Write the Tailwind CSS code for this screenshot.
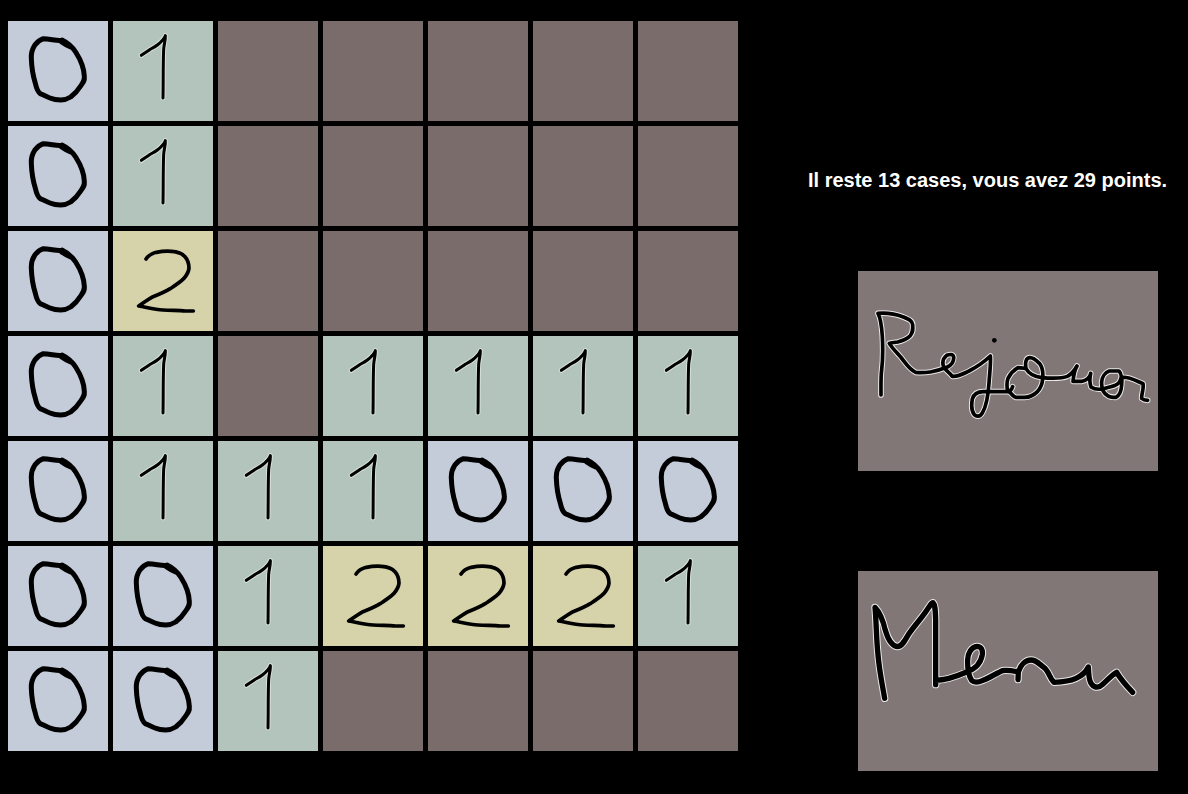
<!DOCTYPE html>
<html lang="fr">
<head>
<meta charset="utf-8">
<title>Démineur</title>
<script src="https://cdn.jsdelivr.net/npm/@tailwindcss/browser@4"></script>
</head>
<body class="min-h-screen bg-black font-['Liberation_Sans',Arial,sans-serif] text-white">
<svg class="hidden" aria-hidden="true">
  <symbol id="d0" viewBox="24 18 300 300">
    <path d="M185 76C172 79 150 71 130 71C118 75 110 83 104 91C96 103 93 113 94 130C95 160 99 182 106 205C109 219 112 230 121 236C130 240 139 245 150 249C162 254 172 255 182 255C194 255 204 251 212 246C225 236 234 226 242 213C250 202 254 197 253 184C252 170 250 160 246 149C241 134 234 122 227 111C219 99 205 84 186 75M184 80Q198 90 212 96" fill="none" stroke="#000" stroke-width="15" stroke-linecap="round" stroke-linejoin="round"/>
  </symbol>
  <symbol id="d1" viewBox="15 18 300 300">
    <defs>
      <path id="un" d="M100 121L125 104C134 99 142 95 148 90C158 82 168 73 172 62C173 76 168 87 167 103C165 150 166 200 165 249"/>
    </defs>
    <g fill="none" stroke-linecap="round" stroke-linejoin="round">
      <use href="#un" stroke="#d5e0da" stroke-width="15"/>
      <use href="#un" stroke="#000" stroke-width="9"/>
    </g>
  </symbol>
  <symbol id="d2" viewBox="15 15 300 300">
    <path d="M114 99C122 87 133 82 145 79C160 76 176 75 190 76C208 77 222 82 231 92C240 102 243 113 243 126C242 139 236 148 227 158C215 170 202 178 188 187C170 198 153 205 135 212C119 221 105 232 92 240C116 244 140 251 165 252C190 254 213 252 232 255L256 255" fill="none" stroke="#000" stroke-width="11" stroke-linecap="round" stroke-linejoin="round"/>
  </symbol>
</svg>
<main class="flex items-start gap-[70px] pt-[21px] pl-2">
  <div id="grille" class="grid shrink-0 grid-cols-7 gap-[5px]" role="group" aria-label="Grille"></div>
  <aside class="flex flex-col">
    <p class="mt-[147px] text-xl leading-6 font-bold whitespace-nowrap">Il reste 13 cases, vous avez 29 points.</p>
    <div class="mt-[79px] ml-[50px] flex flex-col gap-[100px]">
      <button type="button" aria-label="Rejouer" class="h-[200px] w-[300px] cursor-pointer bg-[#827777]">
        <svg viewBox="9 9 900 600" class="block size-full" fill="none" stroke-linecap="round" stroke-linejoin="round" aria-hidden="true">
          <defs>
            <path id="rejouer" d="M69 136C78 152 80 175 82 205C84 245 84 275 80 305C77 330 78 355 78 381M69 136C95 134 122 138 145 147C162 154 172 158 173 170C174 185 174 194 165 204C155 214 143 218 128 222C117 224 109 223 103 226C112 241 125 253 137 267C150 283 162 304 182 313C196 315 212 314 226 312C245 309 262 303 277 297C289 291 297 279 296 267C294 257 284 259 275 262C265 270 261 283 266 297C272 308 283 312 292 325C310 327 325 317 342 309C365 297 389 280 406 264C408 285 404 315 402 345C400 375 395 412 383 433C376 447 365 447 358 440C350 430 349 410 352 393C356 379 368 371 385 371L453 371C462 371 470 368 473 356M458 371C455 355 455 342 459 331C466 317 477 306 489 299C500 299 506 301 513 302C510 285 512 270 524 269C536 268 546 279 554 287C563 299 565 313 563 332C562 350 556 361 548 370C536 382 524 388 509 388L483 388C476 387 470 378 465 373L458 371M513 302C521 316 535 326 560 329C585 331 617 333 637 325C650 318 660 305 666 294C658 307 656 321 654 340L680 340C693 339 706 328 707 316C704 330 703 344 708 357C718 364 736 366 756 359C773 355 787 353 794 341C801 329 799 316 792 309L763 309C751 313 741 326 740 342C739 361 746 376 758 383C765 388 775 388 783 388C796 381 799 366 800 351L801 328C822 325 842 338 864 347C867 363 859 378 860 391C866 396 872 397 878 397"/>
          </defs>
          <use href="#rejouer" stroke="#ebe8e8" stroke-width="17"/>
          <use href="#rejouer" stroke="#000" stroke-width="11"/>
          <circle cx="418" cy="217" r="7" fill="#000"/>
        </svg>
      </button>
      <button type="button" aria-label="Menu" class="h-[200px] w-[300px] cursor-pointer bg-[#827777]">
        <svg viewBox="9 9 900 600" class="block size-full" fill="none" stroke-linecap="round" stroke-linejoin="round" aria-hidden="true">
          <defs>
            <path id="menu" d="M89 391C82 350 73 309 69 260C64 215 64 160 60 118C77 135 84 157 91 187C98 211 111 234 127 236C141 235 149 219 160 200C175 176 205 145 219 121C226 112 229 104 234 104C241 111 241 130 242 155L242 350M242 337C275 337 305 325 335 312C362 303 378 283 382 260C384 245 378 235 366 235C350 236 338 256 338 275C337 300 341 323 350 337C359 346 370 343 384 337C405 329 425 315 442 308C458 305 475 309 490 312L489 335M490 312C497 290 512 276 528 276C543 276 552 287 565 297C582 308 583 330 597 343C622 342 645 339 663 331C681 323 693 312 700 297C702 320 700 338 711 350C720 360 732 360 742 350C757 338 768 322 785 313C797 334 815 354 833 373"/>
          </defs>
          <use href="#menu" stroke="#ebe8e8" stroke-width="22"/>
          <use href="#menu" stroke="#000" stroke-width="16"/>
        </svg>
      </button>
    </div>
  </aside>
</main>
<script>
  const rows = ["01.....", "01.....", "02.....", "01.1111", "0111000", "0012221", "001...."];
  const fills = { "0": "bg-[#c4cbd9]", "1": "bg-[#b2c4bc]", "2": "bg-[#d6d2aa]", ".": "bg-[#7b6c6c]" };
  document.getElementById("grille").innerHTML = rows.map((row, y) => [...row].map((c, x) =>
    `<button type="button" class="size-[100px] cursor-pointer ${fills[c]}" aria-label="Ligne ${y + 1}, colonne ${x + 1} : ${c === "." ? "cachée" : c}">${
      c === "." ? "" : `<svg class="block size-full" aria-hidden="true"><use href="#d${c}"/></svg>`}</button>`).join("")).join("");
</script>
</body>
</html>
